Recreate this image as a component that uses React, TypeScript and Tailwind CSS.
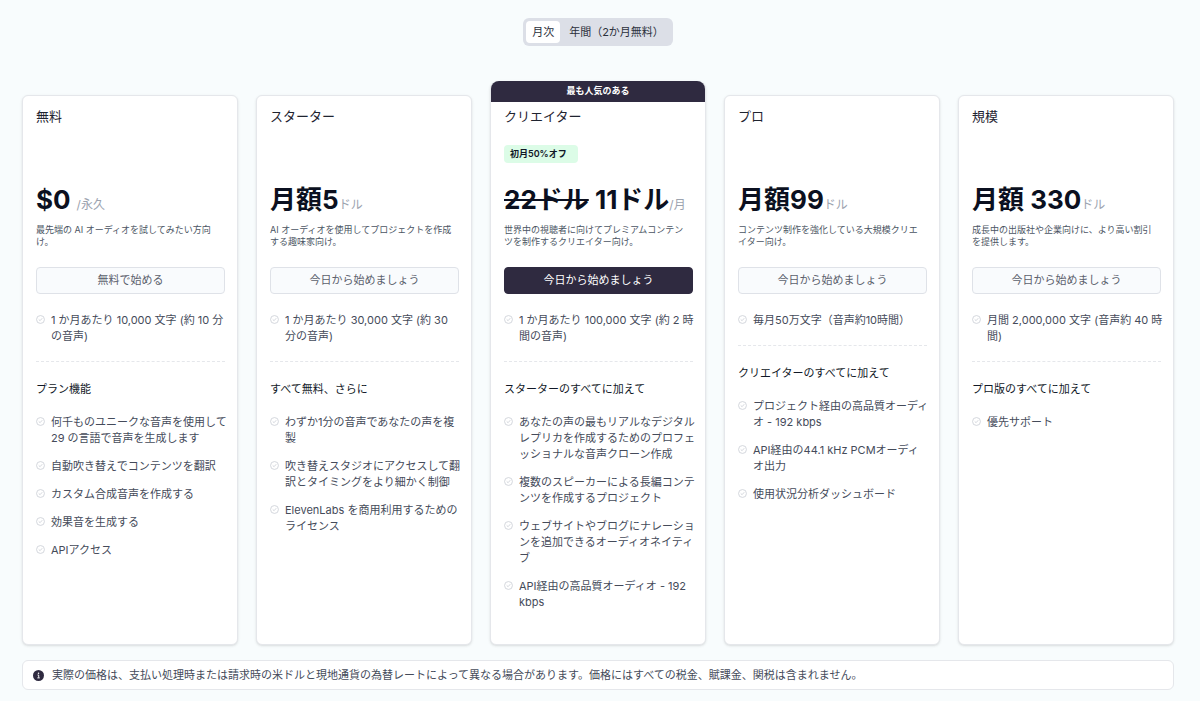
import { useState } from "react";
import clsx from "clsx";

type Plan = {
  name: string;
  price: string;
  oldPrice?: string;
  unit: string;
  unitGap?: boolean;
  description: string;
  cta: string;
  quota: string;
  featuresTitle: string;
  features: string[];
  badge?: string;
  banner?: string;
};

const plans: Plan[] = [
  {
    name: "無料",
    price: "$0",
    unit: "/永久",
    unitGap: true,
    description: "最先端の AI オーディオを試してみたい方向\nけ。",
    cta: "無料で始める",
    quota: "1 か月あたり 10,000 文字 (約 10 分\nの音声)",
    featuresTitle: "プラン機能",
    features: [
      "何千ものユニークな音声を使用して\n29 の言語で音声を生成します",
      "自動吹き替えでコンテンツを翻訳",
      "カスタム合成音声を作成する",
      "効果音を生成する",
      "APIアクセス",
    ],
  },
  {
    name: "スターター",
    price: "月額5",
    unit: "ドル",
    description: "AI オーディオを使用してプロジェクトを作成\nする趣味家向け。",
    cta: "今日から始めましょう",
    quota: "1 か月あたり 30,000 文字 (約 30\n分の音声)",
    featuresTitle: "すべて無料、さらに",
    features: [
      "わずか1分の音声であなたの声を複\n製",
      "吹き替えスタジオにアクセスして翻\n訳とタイミングをより細かく制御",
      "ElevenLabs を商用利用するための\nライセンス",
    ],
  },
  {
    name: "クリエイター",
    oldPrice: "22ドル",
    price: "11ドル",
    unit: "/月",
    description: "世界中の視聴者に向けてプレミアムコンテン\nツを制作するクリエイター向け。",
    cta: "今日から始めましょう",
    quota: "1 か月あたり 100,000 文字 (約 2 時\n間の音声)",
    featuresTitle: "スターターのすべてに加えて",
    features: [
      "あなたの声の最もリアルなデジタル\nレプリカを作成するためのプロフェ\nッショナルな音声クローン作成",
      "複数のスピーカーによる長編コンテ\nンツを作成するプロジェクト",
      "ウェブサイトやブログにナレーショ\nンを追加できるオーディオネイティ\nブ",
      "API経由の高品質オーディオ - 192\nkbps",
    ],
    badge: "初月50%オフ",
    banner: "最も人気のある",
  },
  {
    name: "プロ",
    price: "月額99",
    unit: "ドル",
    description: "コンテンツ制作を強化している大規模クリエ\nイター向け。",
    cta: "今日から始めましょう",
    quota: "毎月50万文字（音声約10時間）",
    featuresTitle: "クリエイターのすべてに加えて",
    features: [
      "プロジェクト経由の高品質オーディ\nオ - 192 kbps",
      "API経由の44.1 kHz PCMオーディ\nオ出力",
      "使用状況分析ダッシュボード",
    ],
  },
  {
    name: "規模",
    price: "月額 330",
    unit: "ドル",
    description: "成長中の出版社や企業向けに、より高い割引\nを提供します。",
    cta: "今日から始めましょう",
    quota: "月間 2,000,000 文字 (音声約 40 時\n間)",
    featuresTitle: "プロ版のすべてに加えて",
    features: ["優先サポート"],
  },
];

function CheckIcon() {
  return (
    <svg viewBox="0 0 18 18" className="mt-[3px] size-[9px] shrink-0 text-[#cfd2d9]" fill="none" stroke="currentColor" aria-hidden="true">
      <circle cx="9" cy="9" r="7.9" strokeWidth="1.8" />
      <path d="M6 9.4l2.2 2 3.8-4.4" strokeWidth="1.8" strokeLinecap="round" strokeLinejoin="round" />
    </svg>
  );
}

function FeatureList({ items }: { items: string[] }) {
  return (
    <ul className="flex flex-col gap-3">
      {items.map((item) => (
        <li key={item} className="flex gap-[6px] text-[11px] leading-4 text-[#454b5a]">
          <CheckIcon />
          <span className="whitespace-pre">{item}</span>
        </li>
      ))}
    </ul>
  );
}

function PlanCard({ plan }: { plan: Plan }) {
  return (
    <article
      className={clsx(
        "flex min-w-0 flex-col border border-[#e5e7eb] bg-white shadow-sm",
        plan.banner ? "-mt-[14px] rounded-b-md rounded-t-lg" : "rounded-md",
      )}
    >
      {plan.banner && (
        <p className="-mt-px h-[21px] rounded-t-lg bg-[#2f2a40] text-center text-[9px] font-bold leading-5 text-white">
          {plan.banner}
        </p>
      )}
      <div className={clsx("pb-[34px] pl-[13px] pr-3", plan.banner ? "pt-1" : "pt-[10px]")}>
        <h2 className="text-[13px] leading-5 text-[#1f2430]">{plan.name}</h2>
        <div className="mt-[19px] flex h-[18px]">
          {plan.badge && (
            <span className="rounded-sm bg-[#dcfce7] pl-[6px] pr-[11px] text-[9px] font-semibold leading-[18px] text-[#111827]">
              {plan.badge}
            </span>
          )}
        </div>
        <p className="mt-[19px] whitespace-nowrap text-[26px] font-bold leading-9 text-[#0b1020]">
          {plan.oldPrice && (
            <>
              <s>{plan.oldPrice}</s>{" "}
            </>
          )}
          {plan.price}
          <span className={clsx("text-xs font-normal text-[#9ca3af]", plan.unitGap && "ml-[6px]")}>{plan.unit}</span>
        </p>
        <p className="mt-[6px] whitespace-pre text-[9px] leading-3 text-[#4b5563]">{plan.description}</p>
        <button
          type="button"
          className={clsx(
            "mt-[19px] h-[27px] w-full rounded border text-[11px]",
            plan.banner ? "border-[#2f2a40] bg-[#2f2a40] text-white" : "border-[#dfe2e8] bg-[#f9fbfd] text-[#5b606c]",
          )}
        >
          {plan.cta}
        </button>
        <div className="mt-[18px]">
          <FeatureList items={[plan.quota]} />
        </div>
        <hr className="mt-[17px] border-dashed border-[#e5e7eb]" />
        <h3 className="mb-[17px] mt-[19px] text-[11px] leading-4 text-[#111827]">{plan.featuresTitle}</h3>
        <FeatureList items={plan.features} />
      </div>
    </article>
  );
}

export default function App() {
  const [yearly, setYearly] = useState(false);
  const tab = (active: boolean) =>
    clsx("h-[22px] rounded px-[6px] text-[11px] text-[#2b303b]", active && "bg-white");

  return (
    <main className="min-h-screen bg-[#f8fcfd] pb-3 pl-[22px] pr-[26px] pt-[18px] font-['Inter','Noto_Sans_CJK_JP',sans-serif]">
      <div className="mx-auto flex w-fit rounded-md bg-[#dcdfe7] p-[3px]">
        <button type="button" aria-pressed={!yearly} onClick={() => setYearly(false)} className={tab(!yearly)}>
          月次
        </button>
        <button type="button" aria-pressed={yearly} onClick={() => setYearly(true)} className={clsx(tab(yearly), "ml-[3px]")}>
          年間（2か月無料）
        </button>
      </div>
      <section className="mt-[49px] grid grid-cols-5 gap-[18px]">
        {plans.map((plan) => (
          <PlanCard key={plan.name} plan={plan} />
        ))}
      </section>
      <aside className="mt-[15px] flex items-center gap-2 rounded-md border border-[#e5e7eb] bg-white px-[10px] py-[6px] text-[11px] leading-4 text-[#454b5a]">
        <svg viewBox="0 0 22 22" className="size-[11px] shrink-0" aria-hidden="true">
          <circle cx="11" cy="11" r="11" fill="#2f2a40" />
          <circle cx="11" cy="6.6" r="1.5" fill="#fff" />
          <path d="M9 10h2.4v5.5M8.6 15.8h5" stroke="#fff" strokeWidth="1.8" fill="none" />
        </svg>
        <p>
          実際の価格は、支払い処理時または請求時の米ドルと現地通貨の為替レートによって異なる場合があります。価格にはすべての税金、賦課金、関税は含まれません。
        </p>
      </aside>
    </main>
  );
}
